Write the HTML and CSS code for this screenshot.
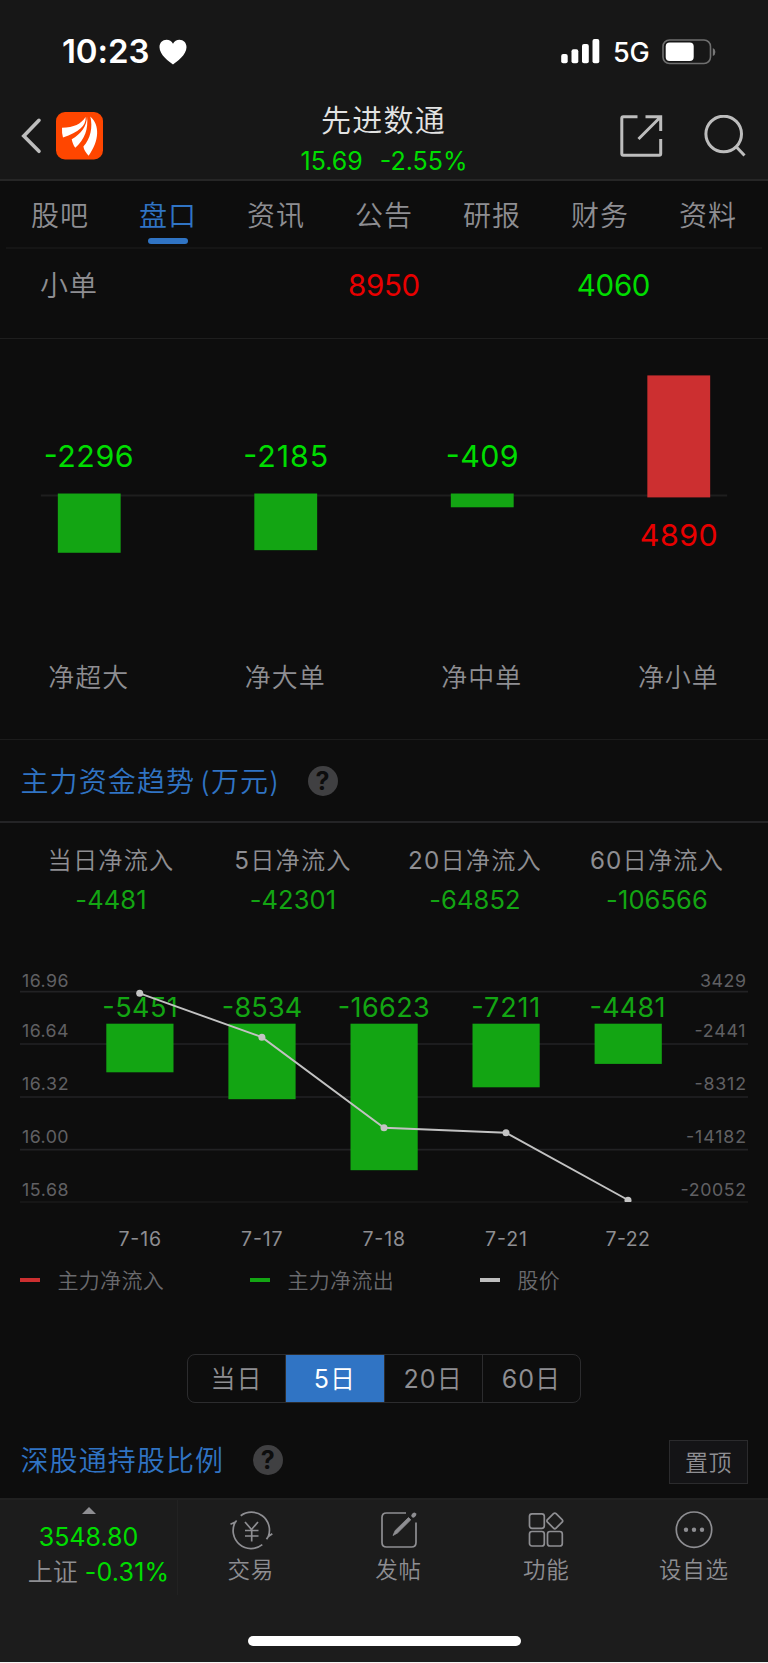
FILE: index.html
```html
<!DOCTYPE html>
<html lang="zh-CN">
<head>
<meta charset="utf-8">
<title>先进数通</title>
<link rel="stylesheet" href="styles.css">
</head>
<body>
<div class="phone">
  <header class="top">
    <div class="status">
      <div class="clock"><span>10:23</span>
        <svg width="28" height="26" viewBox="0 0 28 26"><path d="M14 25.5C10.500 23 .5 16 .5 8.300.5 3.700 3.600.8 7.500.8c2.800 0 5.200 1.600 6.500 4 1.300-2.400 3.700-4 6.500-4 3.900 0 7 2.900 7 7.500C27.500 16 17.500 23 14 25.500z" fill="#fff"/></svg>
      </div>
      <div class="signal">
        <svg width="40" height="26" viewBox="0 0 40 26" fill="#fff"><rect x="1.200" y="15" width="6.500" height="9.300" rx="2"/><rect x="11.500" y="10.300" width="6.800" height="14" rx="2"/><rect x="22" y="5" width="6.800" height="19.300" rx="2"/><rect x="32.500" y="0" width="6.800" height="24.300" rx="2"/></svg>
        <span class="net">5G</span>
        <svg width="54" height="26" viewBox="0 0 54 26"><rect x="1" y="1" width="47.500" height="23.500" rx="6.500" fill="none" stroke="#6f6f6f" stroke-width="1.600"/><rect x="3.700" y="3.500" width="28" height="18.500" rx="4" fill="#fff"/><path d="M50.800 9v8q2.600-1 2.600-4t-2.600-4z" fill="#777"/></svg>
      </div>
    </div>
    <div class="titlebar">
      <div class="nav-left">
        <svg width="22" height="38" viewBox="0 0 22 38"><path d="M19 3.300 3.800 19 19 34.300" fill="none" stroke="#bdbdbd" stroke-width="3.600" stroke-linecap="round" stroke-linejoin="miter"/></svg>
        <svg class="logo" width="47" height="48" viewBox="0 0 47 48"><rect width="47" height="47.500" rx="9" fill="#ff4600"/><g fill="#fff"><path d="M6 15.700C18 15.500 25 12 29.600 5c.8 9-7 15-22.600 20.500Q5.700 21 6 15.700z"/><path d="M31 4.300C32.500 17 29 27 19.300 35.800 17.500 33.500 16.300 30.500 15.700 27.300 25 22 31 14 31 4.300z"/><path d="M34.300 4.600C44 13 43.500 29 32.600 43.800 30 41 27.800 38 27.400 34.600 34.500 27 37 15 34.300 4.600z"/></g></svg>
      </div>
      <div class="stock">
        <div class="name">先进数通</div>
        <div class="quote"><span>15.69</span><span>-2.55%</span></div>
      </div>
      <div class="nav-right">
        <svg width="43" height="42" viewBox="0 0 43 42" fill="none" stroke="#bdbdbd" stroke-width="3"><path d="M17.500 1.800H3.300q-1.500 0-1.500 1.500v35.400q0 1.500 1.500 1.500h35.900q1.500 0 1.500-1.500V24M25.500 1.800h15.200V16M40 2.500 18.500 24"/></svg>
        <svg width="42" height="42" viewBox="0 0 42 42" fill="none" stroke="#bdbdbd" stroke-width="3"><circle cx="19.700" cy="19" r="17.800"/><path d="m32 31.500 8.500 9"/></svg>
      </div>
    </div>
  </header>

  <nav class="tabs"><span>股吧</span><span class="on">盘口</span><span>资讯</span><span>公告</span><span>研报</span><span>财务</span><span>资料</span></nav>

  <div class="order-row"><span class="kind">小单</span><span class="in">8950</span><span class="out">4060</span></div>

  <svg class="net-chart" width="768" height="401" viewBox="0 339 768 401">
    <path d="M40 496H728" stroke="#1e1e1e" stroke-width="2"/>
    <g fill="#13a513"><rect x="57" y="493.900" width="63" height="59.400"/><rect x="254" y="493.900" width="63" height="56.800"/><rect x="451" y="493.900" width="63" height="13.800"/></g>
    <rect x="648" y="375.500" width="63" height="122.300" fill="#cc2f30"/>
    <g class="big green"><text x="43" y="467.700" textLength="90">-2296</text><text x="243" y="467.700" textLength="85">-2185</text><text x="446" y="467.700" textLength="73">-409</text></g>
    <text class="big red" x="640.500" y="546.700" textLength="78">4890</text>
    <g class="cat"><text x="88" y="687.500">净超大</text><text x="285" y="687.500">净大单</text><text x="482" y="687.500">净中单</text><text x="679" y="687.500">净小单</text></g>
  </svg>

  <section class="section-title"><h2>主力资金趋势<span class="unit">(万元)</span></h2><i class="help">?</i></section>

  <div class="stats">
    <div><span>当日净流入</span><b>-4481</b></div>
    <div><span><b>5</b>日净流入</span><b>-42301</b></div>
    <div><span><b>20</b>日净流入</span><b>-64852</b></div>
    <div><span><b>60</b>日净流入</span><b>-106566</b></div>
  </div>

  <svg class="trend" width="768" height="330" viewBox="0 930 768 330">
    <g stroke="#222224" stroke-width="1.700"><path d="M20 991.700H748M20 1044H748M20 1097H748M20 1149.700H748"/><path d="M20 1202H748" stroke="#1a1a1a"/></g>
    <g fill="#13a513"><rect x="106.300" y="1023.700" width="67.200" height="48.600"/><rect x="228.400" y="1023.700" width="67.200" height="75.500"/><rect x="350.500" y="1023.700" width="67.200" height="146.500"/><rect x="472.500" y="1023.700" width="67.200" height="63.600"/><rect x="594.600" y="1023.700" width="67.200" height="40.200"/></g>
    <g class="axis"><text x="22" y="987" textLength="46.500">16.96</text><text x="22" y="1037.300" textLength="46.500">16.64</text><text x="22" y="1090.300" textLength="46.500">16.32</text><text x="22" y="1143.300" textLength="46.500">16.00</text><text x="22" y="1196.300" textLength="46.500">15.68</text>
    <text x="700" y="987" textLength="46">3429</text><text x="694.500" y="1037.300" textLength="51">-2441</text><text x="694.500" y="1090.300" textLength="51.500">-8312</text><text x="686" y="1143.300" textLength="60">-14182</text><text x="680.500" y="1196.300" textLength="65.500">-20052</text></g>
    <g class="val"><text x="102.300" y="1017.300" textLength="75.500">-5451</text><text x="221.800" y="1017.300" textLength="80.500">-8534</text><text x="337.800" y="1017.300" textLength="92">-16623</text><text x="471.300" y="1017.300" textLength="69">-7211</text><text x="589.500" y="1017.300" textLength="76">-4481</text></g>
    <clipPath id="plot"><rect x="20" y="980" width="728" height="222"/></clipPath>
    <g clip-path="url(#plot)"><path d="M139.700 993.300 261.900 1037.200 384 1127.700 506 1132.700 628 1200" fill="none" stroke="#c2c2c2" stroke-width="1.900"/><g fill="#c4c4c4"><circle cx="139.700" cy="993.300" r="3.500"/><circle cx="261.900" cy="1037.200" r="3.500"/><circle cx="384" cy="1127.700" r="3.500"/><circle cx="506" cy="1132.700" r="3.500"/><circle cx="628" cy="1200.200" r="3.500"/></g></g>
    <g class="date"><text x="118.500" y="1246.300" textLength="42.500">7-16</text><text x="241" y="1246.300" textLength="41.500">7-17</text><text x="362.500" y="1246.300" textLength="42.500">7-18</text><text x="485" y="1246.300" textLength="42">7-21</text><text x="605.500" y="1246.300" textLength="44.500">7-22</text></g>
  </svg>

  <div class="legend"><div><i class="lr"></i>主力净流入</div><div><i class="lg"></i>主力净流出</div><div><i class="lw"></i>股价</div></div>

  <div class="range"><span>当日</span><span class="active"><b>5</b>日</span><span><b>20</b>日</span><span><b>60</b>日</span></div>

  <section class="holding"><h2>深股通持股比例</h2><i class="help">?</i><span class="pin">置顶</span></section>

  <footer class="bottom">
    <div class="bar">
      <div class="index"><svg width="14" height="7" viewBox="0 0 14 7"><path d="M7 0l7 7H0z" fill="#8e8e92"/></svg><span class="idx">3548.80</span><span class="chg">上证<b>-0.31%</b></span></div>
      <div class="item"><svg width="44" height="40" viewBox="0 0 44 40" fill="none" stroke="#8e8e92" stroke-width="1.700"><path d="M11.700 5.700A18 18 0 0 1 39.300 26.500l4-2.700M39.300 26.500l-1.800 2.800M33.300 34.700A18 18 0 0 1 6.300 12l-4.800 2.200M6.300 12l1.200-1"/><path d="M16 12l6.500 7.500L29 12M16 20.500h13.500M16 26h13.500M22.700 20v11.500"/></svg><span>交易</span></div>
      <div class="item"><svg width="44" height="40" viewBox="0 0 44 40" fill="none" stroke="#8e8e92" stroke-width="1.700"><path d="M29 3H9.500Q5 3 5 7.500v25Q5 37 9.500 37h25q4.500 0 4.500-4.500V12.500"/><path d="M16 25.500l2.200-5L31.500 7.500l2.300 2.300L20.500 23z" fill="#8e8e92" stroke-width=".8"/><path d="M36.300 5.700l1-1" stroke-width="4" stroke-linecap="round"/></svg><span>发帖</span></div>
      <div class="item"><svg width="44" height="40" viewBox="0 0 44 40" fill="none" stroke="#8e8e92" stroke-width="1.700"><rect x="5.500" y="3.800" width="14.800" height="14.500" rx="2.500"/><rect x="5.500" y="21.500" width="14.800" height="14.500" rx="2.500"/><rect x="23.500" y="21.500" width="14.800" height="14.500" rx="2.500"/><path d="M29.500 3.700q1.300-1.300 2.600 0l6 6q1.200 1.200 0 2.400l-6 6q-1.300 1.300-2.600 0l-6-6q-1.200-1.200 0-2.400z"/></svg><span>功能</span></div>
      <div class="item"><svg width="44" height="40" viewBox="0 0 44 40" fill="none" stroke="#8e8e92" stroke-width="1.700"><circle cx="22" cy="19.700" r="17.700"/><g fill="#8e8e92" stroke="none"><circle cx="14" cy="19.800" r="2.200"/><circle cx="22" cy="19.800" r="2.200"/><circle cx="30" cy="19.800" r="2.200"/></g></svg><span>设自选</span></div>
    </div>
    <div class="home"></div>
  </footer>
</div>
</body>
</html>
```
FILE: styles.css
```css
* { box-sizing: border-box; }
body { margin: 0; background: #0d0d0d; }
svg { display: block; flex: none; }
i, h2 { font-style: normal; margin: 0; }
b { font-weight: 400; }

.phone {
  width: 768px;
  height: 1663px;
  overflow: hidden;
  display: flex;
  flex-direction: column;
  background: #0d0d0d;
  color: #8e8e92;
  font-family: Inter, "Noto Sans CJK SC", sans-serif;
  font-weight: 350;
  line-height: 1;
  white-space: nowrap;
  border-bottom: 1px solid #f4f4f4;
}
.phone > * { flex: none; }

.top { height: 181px; background: #171717; border-bottom: 2px solid #262626; }
.status { height: 90px; padding: 39px 52px 0 62px; display: flex; justify-content: space-between; }
.clock { display: flex; gap: 10px; color: #fff; font-size: 33px; font-weight: 600; letter-spacing: -.1px; }
.clock span { width: 87px; line-height: 25px; }
.signal { display: flex; color: #fff; }
.net { width: 37px; margin: 0 12px 0 13px; font-size: 27px; font-weight: 500; line-height: 27px; letter-spacing: -.3px; }

.titlebar { display: flex; justify-content: space-between; height: 89px; padding: 12px 22px 0 20px; }
.nav-left { width: 203px; display: flex; gap: 14px; padding-top: 10px; }
.nav-left > :first-child { margin-top: 5px; }
.stock { text-align: center; }
.name { color: #e3e3e3; font-size: 30px; line-height: 36px; letter-spacing: 1.200px; padding-left: 1px; }
.quote { display: flex; gap: 17px; justify-content: center; color: #00dc00; font-size: 25px; font-weight: 400; line-height: 30px; margin-top: 8px; padding-left: 2px; }
.nav-right { width: 203px; display: flex; justify-content: flex-end; gap: 41px; padding-top: 13px; }

.tabs { display: flex; height: 68px; margin: 0 6px; border-bottom: 2px solid #151515; }
.tabs span { width: 108px; text-align: center; font-size: 28px; letter-spacing: 1px; line-height: 66px; padding-top: 2px; }
.tabs .on { color: #3074c4; display: flex; flex-direction: column; align-items: center; }
.tabs .on::after { content: ""; width: 40px; height: 6px; border-radius: 3px; background: #3074c4; margin-top: -11px; }

.order-row { display: flex; height: 90px; border-bottom: 1px solid #1e1e1e; line-height: 72px; font-size: 29.500px; font-weight: 400; }
.kind { width: 270px; padding-left: 40px; padding-top: 1px; font-size: 28px; letter-spacing: 1px; font-weight: 350; }
.in { width: 228px; text-align: center; color: #e80000; letter-spacing: -.3px; }
.out { width: 231px; text-align: center; color: #00dc00; letter-spacing: -.3px; }

svg text { font-family: Inter, "Noto Sans CJK SC", sans-serif; font-weight: 400; }
.net-chart { border-bottom: 1px solid #1c1c1c; }
.big { font-size: 30.500px; }
.green { fill: #00dc00; }
.red { fill: #e80000; }
.cat { font-size: 26px; letter-spacing: 1px; fill: #8e8e92; text-anchor: middle; }
.cat text { font-weight: 350; }

.section-title { height: 83px; display: flex; align-items: center; border-bottom: 2px solid #242426; padding: 1px 0 0 20.500px; }
h2 { color: #3074c4; font-size: 28px; font-weight: 350; letter-spacing: 1.100px; padding-top: 1px; }
.unit { margin-left: 5px; }
.help { width: 30px; height: 30px; border-radius: 50%; background: #404042; color: #0d0d0d; font-size: 25px; font-weight: 700; line-height: 30px; text-align: center; margin-left: 27.500px; }

.stats { height: 107px; display: grid; grid-template-columns: repeat(4, 182px); padding: 20px 0 0 20px; text-align: center; }
.stats div { display: flex; flex-direction: column; }
.stats span { font-size: 24.200px; letter-spacing: 1.200px; line-height: 36px; }
.stats div > b { font-size: 25.500px; line-height: 42px; color: #13a513; letter-spacing: .1px; }
.stats span > b { font-size: inherit; line-height: inherit; color: inherit; }

.axis { font-size: 17.800px; fill: #606063; }
.val { font-size: 27px; fill: #13a513; }
.date { font-size: 19.500px; fill: #8e8e92; }

.legend { display: flex; height: 40px; padding-left: 20px; font-size: 21px; letter-spacing: .3px; color: #6a6a6d; }
.legend div { width: 230px; display: flex; align-items: center; }
.legend i { width: 20px; height: 4px; margin-right: 17.500px; }
.lr { background: #cc2f30; }
.lg { background: #13a513; }
.lw { background: #bdbdbd; }

.range { width: 394px; height: 49px; margin: 54px 0 0 187px; border: 1px solid #2c2c2e; border-radius: 8px; display: flex; overflow: hidden; font-size: 25px; letter-spacing: 1px; }
.range span { flex: 1; text-align: center; line-height: 49px; border-right: 1px solid #2c2c2e; }
.range span:last-child { border-right: 0; }
.range .active { background: #3074c4; color: #fff; }

.holding { height: 95px; display: flex; align-items: center; padding: 19px 20px 0 20.500px; }
.holding .help { margin-left: 28.500px; }
.pin { margin-left: auto; width: 79px; height: 44px; border: 1px solid #2b2b2d; background: #141416; font-size: 23px; text-align: center; line-height: 44px; letter-spacing: .5px; margin-top: 3px; }

.bottom { height: 164px; background: #1c1c1c; border-top: 2px solid #212121; }
.bar { display: flex; height: 136px; }
.index { width: 178px; height: 95px; border-right: 1px solid #222; display: flex; flex-direction: column; align-items: center; padding-top: 7px; }
.idx { color: #00dc00; font-size: 25px; font-weight: 400; line-height: 46px; }
.chg { display: flex; gap: 7px; font-size: 25px; line-height: 24px; padding-left: 20px; }
.chg b { color: #00dc00; letter-spacing: .2px; }
.item { width: 147.700px; display: flex; flex-direction: column; align-items: center; padding-top: 10px; }
.item:nth-child(2) { margin-left: -1px; }
.item span { font-size: 22.500px; letter-spacing: .8px; line-height: 40px; }
.home { width: 273px; height: 10px; border-radius: 5px; background: #fff; margin-left: 248px; }
```
